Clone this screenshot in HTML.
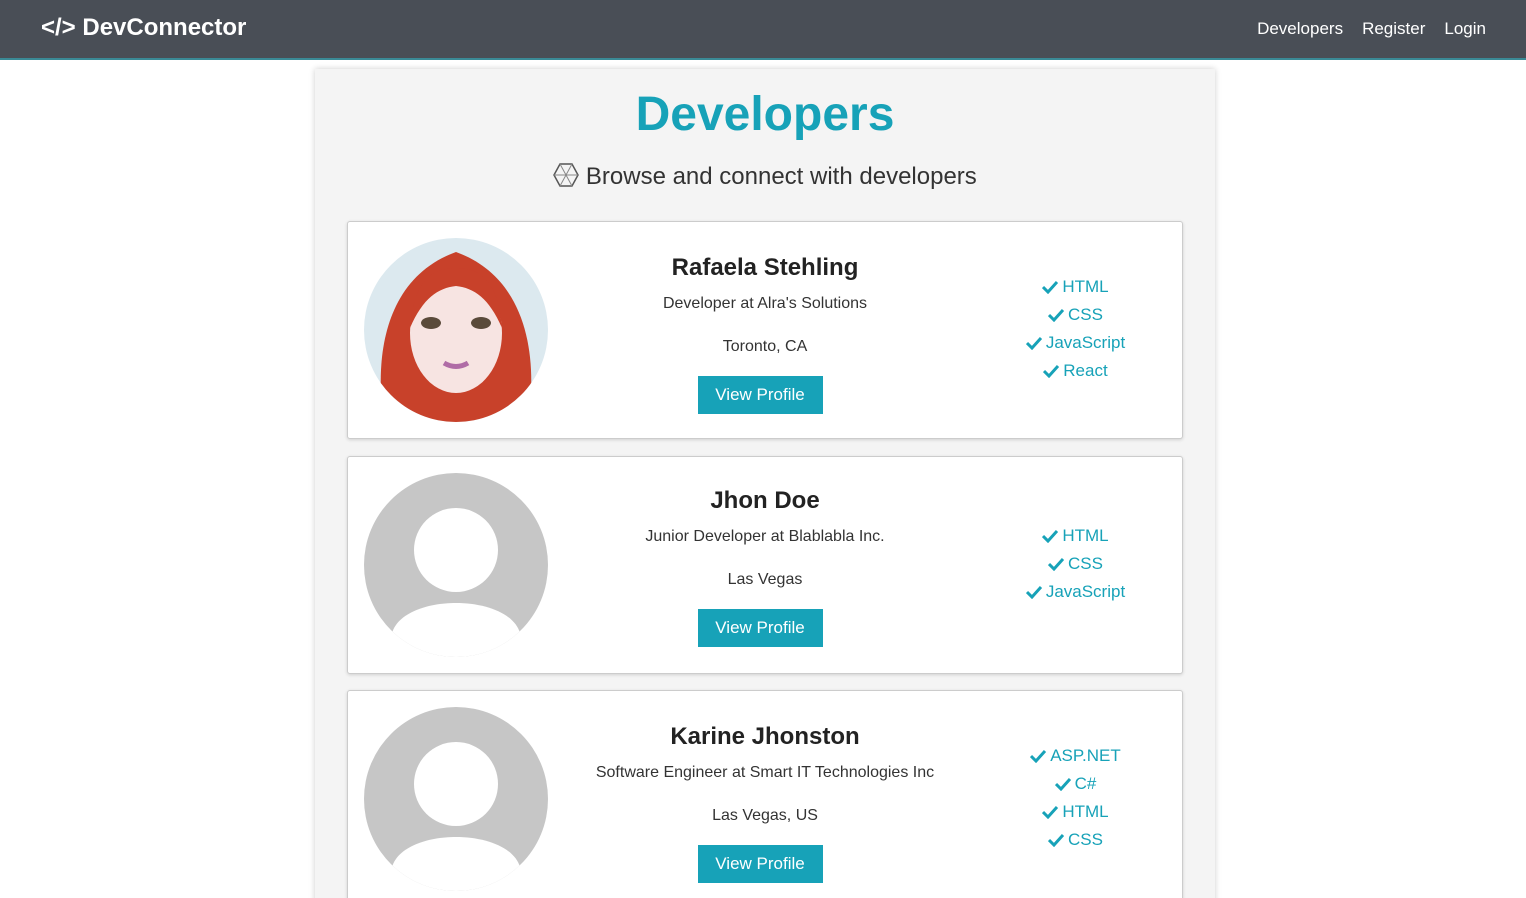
<!DOCTYPE html>
<html><head><style>
*{box-sizing:border-box;margin:0;padding:0}
html,body{width:1526px;height:898px;overflow:hidden}
body{background:#fff;font-family:"Liberation Sans",Arial,sans-serif;color:#333;position:relative}
.nav{position:absolute;left:0;top:0;width:1526px;height:60px;background:#494e56;border-bottom:2px solid #3a8a96}
.logo{position:absolute;left:41px;top:14px;color:#fff;font-weight:bold;font-size:24px}
.links{position:absolute;right:40px;top:19px;color:#fff;font-size:17px}
.links span{margin-left:19px}
.wrap{position:absolute;left:315px;top:69px;width:900px;height:840px;background:#f4f4f4;box-shadow:0 0 6px rgba(0,0,0,.2)}
h1{position:absolute;top:18px;width:100%;text-align:center;color:#17a2b8;font-size:48px;font-weight:bold}
.lead{position:absolute;top:94px;width:100%;text-align:center;font-size:24px;color:#333}
.card{position:absolute;left:32px;width:836px;height:218px;background:#fff;border:1px solid #ccc;border-radius:3px;box-shadow:0 1px 3px rgba(0,0,0,.15)}
.av{position:absolute;left:16px;top:16px;width:184px;height:184px;border-radius:50%;background:#c6c6c6;overflow:hidden}
.mid{position:absolute;left:217px;width:400px;text-align:center;white-space:nowrap}
.mid h2{font-size:24px;margin-top:32px;color:#222}
.mid p{font-size:16px;margin-top:13px}
.mid .loc{margin-top:25px}
.btn{display:inline-block;background:#17a2b8;color:#fff;font-size:17px;height:38px;line-height:38px;margin-top:20px;width:125px;margin-left:-10px}
.sk{position:absolute;left:640px;width:175px;text-align:center;color:#17a2b8;font-size:17px;line-height:28px}
.sk svg{vertical-align:-2px;margin-right:4px}
</style></head><body>
<div class="nav"><div class="logo">&lt;/&gt; DevConnector</div><div class="links"><span>Developers</span><span>Register</span><span>Login</span></div></div>
<div class="wrap">
<h1>Developers</h1>
<div class="lead"><svg width="26" height="24" viewBox="0 0 26 24" style="vertical-align:-3px"><polygon points="7,1 19,1 25,12 19,23 7,23 1,12" fill="none" stroke="#555" stroke-width="1.5"/><path d="M7 1L19 23M19 1L7 23M1 12H25" stroke="#888" fill="none"/></svg> Browse and connect with developers</div>

<div class="card" style="top:152px">
<div class="av" style="background:#dce9ef"><svg width="184" height="184"><path d="M20 184 C10 120 20 40 92 14 C164 40 174 120 164 184Z" fill="#c8412a"/><ellipse cx="92" cy="95" rx="46" ry="60" fill="#f7e4e2"/><path d="M46 90 C50 40 70 30 92 30 C114 30 134 40 138 90 C125 60 110 50 92 48 C74 50 59 60 46 90Z" fill="#c8412a"/><ellipse cx="67" cy="85" rx="10" ry="6" fill="#5a4a3a"/><ellipse cx="117" cy="85" rx="10" ry="6" fill="#5a4a3a"/><path d="M80 125 Q92 132 104 125" stroke="#b06ca6" stroke-width="5" fill="none"/></svg></div>
<div class="mid"><h2>Rafaela Stehling</h2><p>Developer at Alra's Solutions</p><p class="loc">Toronto, CA</p><span class="btn">View Profile</span></div>
<div class="sk" style="top:51px"><div><svg width="16" height="14" viewBox="0 0 16 14"><path d="M1 7l5 5L15 2" stroke="#17a2b8" stroke-width="3" fill="none"/></svg>HTML</div><div><svg width="16" height="14" viewBox="0 0 16 14"><path d="M1 7l5 5L15 2" stroke="#17a2b8" stroke-width="3" fill="none"/></svg>CSS</div><div><svg width="16" height="14" viewBox="0 0 16 14"><path d="M1 7l5 5L15 2" stroke="#17a2b8" stroke-width="3" fill="none"/></svg>JavaScript</div><div><svg width="16" height="14" viewBox="0 0 16 14"><path d="M1 7l5 5L15 2" stroke="#17a2b8" stroke-width="3" fill="none"/></svg>React</div></div>
</div>

<div class="card" style="top:387px">
<div class="av"><svg width="184" height="184"><circle cx="92" cy="77" r="42" fill="#fff"/><path d="M28 160 C40 120 144 120 156 160 L156 184 L28 184Z" fill="#fff"/></svg></div>
<div class="mid"><h2 style="margin-top:30px">Jhon Doe</h2><p>Junior Developer at Blablabla Inc.</p><p class="loc">Las Vegas</p><span class="btn">View Profile</span></div>
<div class="sk" style="top:65px"><div><svg width="16" height="14" viewBox="0 0 16 14"><path d="M1 7l5 5L15 2" stroke="#17a2b8" stroke-width="3" fill="none"/></svg>HTML</div><div><svg width="16" height="14" viewBox="0 0 16 14"><path d="M1 7l5 5L15 2" stroke="#17a2b8" stroke-width="3" fill="none"/></svg>CSS</div><div><svg width="16" height="14" viewBox="0 0 16 14"><path d="M1 7l5 5L15 2" stroke="#17a2b8" stroke-width="3" fill="none"/></svg>JavaScript</div></div>
</div>

<div class="card" style="top:621px">
<div class="av"><svg width="184" height="184"><circle cx="92" cy="77" r="42" fill="#fff"/><path d="M28 160 C40 120 144 120 156 160 L156 184 L28 184Z" fill="#fff"/></svg></div>
<div class="mid"><h2>Karine Jhonston</h2><p>Software Engineer at Smart IT Technologies Inc</p><p class="loc">Las Vegas, US</p><span class="btn">View Profile</span></div>
<div class="sk" style="top:51px"><div><svg width="16" height="14" viewBox="0 0 16 14"><path d="M1 7l5 5L15 2" stroke="#17a2b8" stroke-width="3" fill="none"/></svg>ASP.NET</div><div><svg width="16" height="14" viewBox="0 0 16 14"><path d="M1 7l5 5L15 2" stroke="#17a2b8" stroke-width="3" fill="none"/></svg>C#</div><div><svg width="16" height="14" viewBox="0 0 16 14"><path d="M1 7l5 5L15 2" stroke="#17a2b8" stroke-width="3" fill="none"/></svg>HTML</div><div><svg width="16" height="14" viewBox="0 0 16 14"><path d="M1 7l5 5L15 2" stroke="#17a2b8" stroke-width="3" fill="none"/></svg>CSS</div></div>
</div>
</div>
</body></html>
